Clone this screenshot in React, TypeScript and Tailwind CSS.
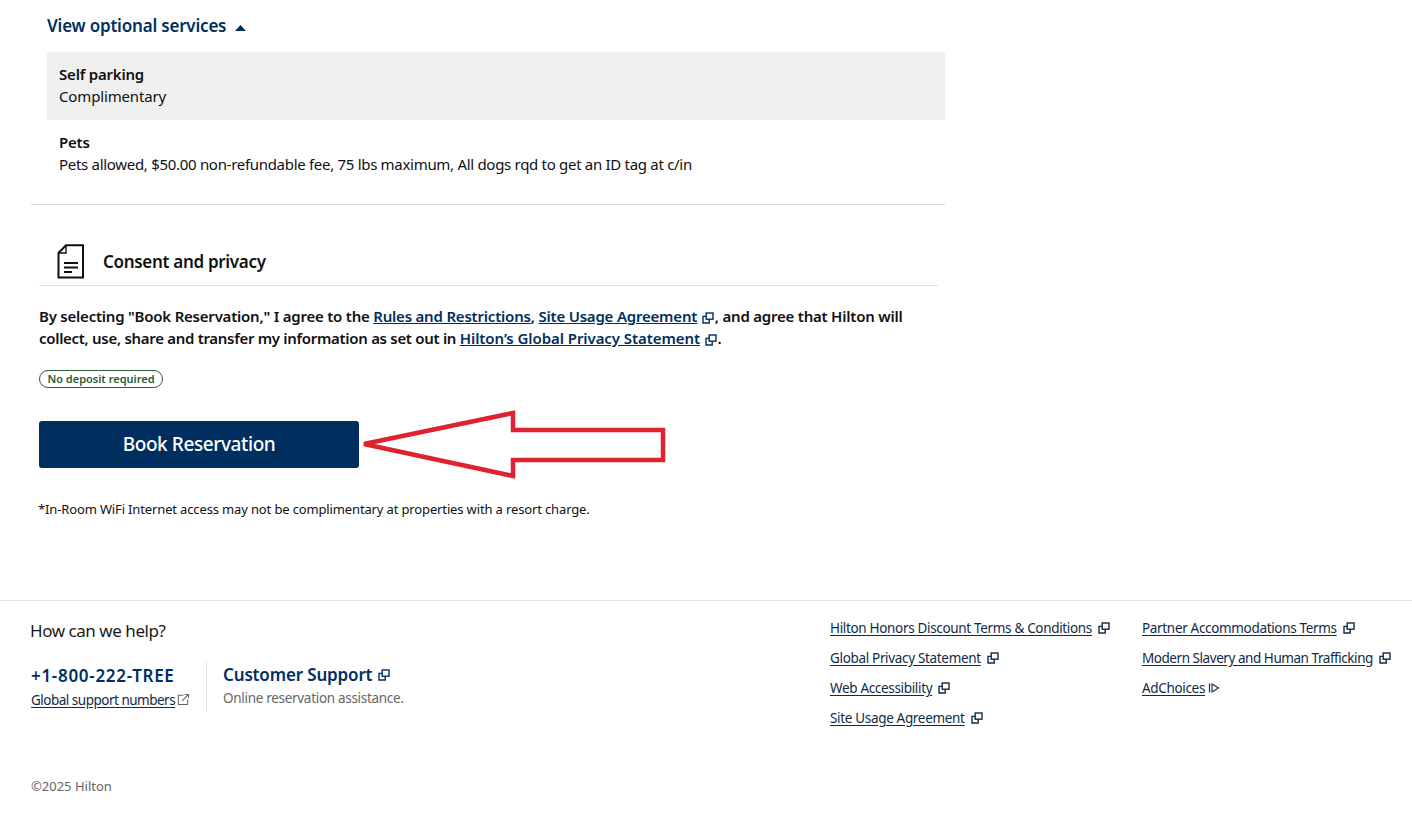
import React from "react";

const Ext = ({ className = "" }: { className?: string }) => (
  <svg viewBox="0 0 12 12" width="12" height="12" fill="none" stroke="currentColor" strokeWidth="1.4" className={`inline-block shrink-0 ${className}`}>
    <rect x="4.2" y="1" width="6.8" height="6.2" />
    <path d="M4.2 4.4H1V11H7.2V7.2" />
  </svg>
);

const FooterLink = ({ children, play, tight }: { children: string; play?: boolean; tight?: boolean }) => (
  <div className={`h-[30px] flex items-center gap-[6px] text-[#0f2b45] text-[13.5px] whitespace-nowrap ${tight ? "tracking-[-0.45px]" : "tracking-[-0.33px]"}`}>
    <span className="underline underline-offset-2">{children}</span>
    {play ? (
      <svg viewBox="0 0 12 12" width="12" height="12" fill="none" stroke="#1c3448" strokeWidth="1.2" className="-ml-[3px]">
        <path d="M1.5 1.5V10.5" />
        <path d="M4 2L10.5 6L4 10Z" />
      </svg>
    ) : (
      <Ext className="text-[#0f2b45]" />
    )}
  </div>
);

export default function App() {
  return (
    <div className="relative w-[1412px] h-[838px] bg-white text-[#111] overflow-hidden" style={{ fontFamily: '"Noto Sans", sans-serif' }}>
      <div className="pl-[31px] w-[945px]">
        <div className="pl-[16px]">
          <div className="h-[52px] flex items-center gap-[9px] text-[#002f5f] text-[17px] font-semibold tracking-[-0.2px]">
            View optional services
            <svg width="11" height="6" viewBox="0 0 11 6" className="mt-[3px]"><path d="M5.5 0L11 6H0Z" fill="#002f5f" /></svg>
          </div>
          <div className="bg-[#f0f0f0] h-[68px] px-[12px] pt-[11px] text-[15px] leading-[22px]">
            <div className="font-semibold tracking-[-0.2px]">Self parking</div>
            <div className="tracking-[-0.15px]">Complimentary</div>
          </div>
          <div className="h-[68px] px-[12px] pt-[11px] text-[15px] leading-[22px]">
            <div className="font-semibold tracking-[-0.2px]">Pets</div>
            <div className="tracking-[-0.3px]">Pets allowed, $50.00 non-refundable fee, 75 lbs maximum, All dogs rqd to get an ID tag at c/in</div>
          </div>
        </div>
        <div className="mt-[16px] border-t border-[#d9d9d9]" />
        <div className="ml-[8px] mr-[7px] mt-[38px] h-[43px] border-b border-[#dedede] flex items-start">
          <svg width="28" height="36" viewBox="0 0 28 36" fill="none" stroke="#111" className="ml-[18px] mt-[1px] shrink-0">
            <path d="M9 1.2H26V33.5H1.5V9Z" strokeWidth="2" />
            <path d="M9 1.5V9H1.5" strokeWidth="1.4" />
            <path d="M7 19H21M7 23.5H21M7 28H15" strokeWidth="1.8" />
          </svg>
          <div className="ml-[18px] mt-[6px] text-[17px] font-semibold tracking-[-0.3px]">Consent and privacy</div>
        </div>
        <div className="ml-[8px] mt-[19px] text-[15px] leading-[22px] font-semibold tracking-[-0.22px] whitespace-nowrap">
          <div>
            By selecting "Book Reservation," I agree to the <span className="text-[#002f5f] underline tracking-[-0.2px]">Rules and Restrictions</span>, <span className="text-[#002f5f] underline tracking-[-0.2px]">Site Usage Agreement</span> <Ext className="text-[#002f5f] mx-[1px]" />, and agree that Hilton will
          </div>
          <div className="tracking-[-0.3px]">
            collect, use, share and transfer my information as set out in <span className="text-[#002f5f] underline tracking-[-0.07px]">Hilton’s Global Privacy Statement</span> <Ext className="text-[#002f5f] mx-[1px]" />.
          </div>
        </div>
        <div className="ml-[8px] mt-[21px] w-[124px] h-[18px] rounded-full border border-[#2f5d3a] text-[#2a5a34] text-[11px] font-semibold flex items-center justify-center">
          No deposit required
        </div>
        <div className="ml-[8px] mt-[33px] w-[320px] h-[47px] rounded-[3px] bg-[#002f5f] text-white text-[19px] font-medium flex items-center justify-center tracking-[-0.4px]">
          Book Reservation
        </div>
        <div className="ml-[8px] mt-[31px] -indent-[1px] text-[13px] leading-[20px] tracking-[-0.14px] whitespace-nowrap">*In-Room WiFi Internet access may not be complimentary at properties with a resort charge.</div>
      </div>

      <svg className="absolute left-[355px] top-[405px]" width="320" height="80" viewBox="355 405 320 80" fill="none" stroke="#e0212f" strokeWidth="4.5" strokeLinejoin="miter" strokeMiterlimit="2">
        <path d="M364 444L513 413V430H663V460H513V476Z" />
      </svg>

      <footer className="mt-[81px] border-t border-[#e0e0e0] flex pl-[31px] pt-[12px] h-[238px] relative">
        <div className="w-[799px]">
          <div className="text-[17px] leading-[36px] tracking-[-0.45px] text-[#1a1a1a] -indent-[1px]">How can we help?</div>
          <div className="flex mt-[12px]">
            <div className="w-[176px] h-[51px] border-r border-[#e3e3e3]">
              <div className="text-[#002f5f] text-[17px] leading-[28px] mt-[1px] font-semibold tracking-[0.7px]">+1-800-222-TREE</div>
              <div className="flex items-center gap-[2px] text-[13.5px] text-[#0f2b45] tracking-[-0.5px]">
                <span className="underline underline-offset-2">Global support numbers</span>
                <svg viewBox="0 0 14 14" width="13" height="13" fill="none" stroke="#666" strokeWidth="1.1" className="mb-[2px]">
                  <path d="M7 2.5H1.5V12.5H11.5V7" />
                  <path d="M5.5 8.5L12.5 1.5M8.5 1.5H12.5V5.5" />
                </svg>
              </div>
            </div>
            <div className="ml-[16px]">
              <div className="flex items-center gap-[6px] text-[#002f5f] text-[17px] leading-[28px] font-semibold tracking-[-0.15px]">
                Customer Support <Ext />
              </div>
              <div className="text-[13.5px] leading-[18px] text-[#666] tracking-[-0.3px]">Online reservation assistance.</div>
            </div>
          </div>
          <div className="mt-[65px] text-[13px] text-[#666]">©2025 Hilton</div>
        </div>
        <div className="w-[312px]">
          <FooterLink>Hilton Honors Discount Terms &amp; Conditions</FooterLink>
          <FooterLink>Global Privacy Statement</FooterLink>
          <FooterLink>Web Accessibility</FooterLink>
          <FooterLink>Site Usage Agreement</FooterLink>
        </div>
        <div>
          <FooterLink>Partner Accommodations Terms</FooterLink>
          <FooterLink tight>Modern Slavery and Human Trafficking</FooterLink>
          <FooterLink play>AdChoices</FooterLink>
        </div>
      </footer>
    </div>
  );
}
